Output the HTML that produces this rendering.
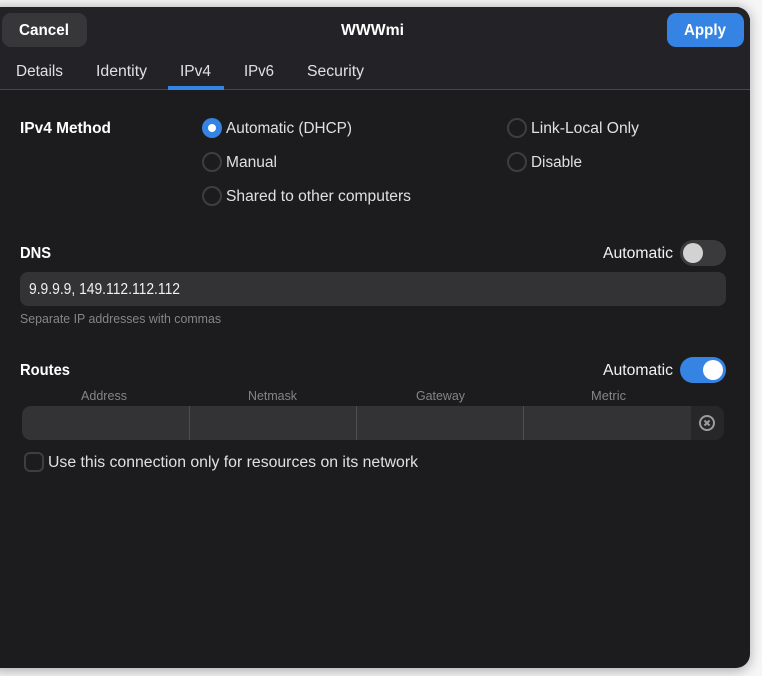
<!DOCTYPE html>
<html><head><meta charset="utf-8"><style>
html,body{margin:0;padding:0;background:#f6f6f6;width:762px;height:676px;overflow:hidden}
svg{display:block;position:absolute;left:0;top:0}
text{font-family:"Liberation Sans",sans-serif;font-size:15.5px;fill:#e0e0e0}
.b{font-weight:700;fill:#fff}
.s{font-size:12.5px;fill:#858585}
</style></head><body>
<svg width="762" height="676" viewBox="0 0 762 676" xmlns="http://www.w3.org/2000/svg">
<defs>
<filter id="sh" x="-5%" y="-5%" width="110%" height="110%"><feGaussianBlur stdDeviation="6"/></filter>
<clipPath id="win"><rect x="-14" y="7" width="764" height="661" rx="14"/></clipPath>
</defs>
<rect x="-14" y="7" width="764" height="664" rx="14" fill="#000" opacity=".3" filter="url(#sh)"/>
<g clip-path="url(#win)">
<rect x="-14" y="7" width="764" height="661" fill="#1c1c1e"/>
<rect x="-14" y="7" width="764" height="82" fill="#232327"/>
<rect x="-14" y="89" width="764" height="1" fill="#48484a"/>
</g>
<rect x="2" y="13" width="85" height="34" rx="9" fill="#37373a"/>
<text class="b" x="19" y="35" textLength="50" lengthAdjust="spacingAndGlyphs">Cancel</text>
<text class="b" x="341" y="35" textLength="63" lengthAdjust="spacingAndGlyphs">WWWmi</text>
<rect x="667" y="13" width="77" height="34" rx="9" fill="#3584e4"/>
<text class="b" x="684" y="35" textLength="42" lengthAdjust="spacingAndGlyphs">Apply</text>

<text x="16" y="76" textLength="47" lengthAdjust="spacingAndGlyphs">Details</text>
<text x="96" y="76" textLength="51" lengthAdjust="spacingAndGlyphs">Identity</text>
<text x="180" y="76" textLength="31" lengthAdjust="spacingAndGlyphs">IPv4</text>
<text x="244" y="76" textLength="30" lengthAdjust="spacingAndGlyphs">IPv6</text>
<text x="307" y="76" textLength="57" lengthAdjust="spacingAndGlyphs">Security</text>
<rect x="168" y="86" width="56" height="4" fill="#3584e4"/>

<text class="b" x="20" y="133" textLength="91" lengthAdjust="spacingAndGlyphs">IPv4 Method</text>
<circle cx="212" cy="128" r="10" fill="#3584e4"/>
<circle cx="212" cy="128" r="4" fill="#fff"/>
<text x="226" y="133" textLength="126" lengthAdjust="spacingAndGlyphs">Automatic (DHCP)</text>
<circle cx="212" cy="162" r="9" fill="none" stroke="#3e3e40" stroke-width="2"/>
<text x="226" y="167" textLength="51" lengthAdjust="spacingAndGlyphs">Manual</text>
<circle cx="212" cy="196" r="9" fill="none" stroke="#3e3e40" stroke-width="2"/>
<text x="226" y="201" textLength="185" lengthAdjust="spacingAndGlyphs">Shared to other computers</text>
<circle cx="517" cy="128" r="9" fill="none" stroke="#3e3e40" stroke-width="2"/>
<text x="531" y="133" textLength="108" lengthAdjust="spacingAndGlyphs">Link-Local Only</text>
<circle cx="517" cy="162" r="9" fill="none" stroke="#3e3e40" stroke-width="2"/>
<text x="531" y="167" textLength="51" lengthAdjust="spacingAndGlyphs">Disable</text>

<text class="b" x="20" y="258" textLength="31" lengthAdjust="spacingAndGlyphs">DNS</text>
<text x="603" y="258" textLength="70" lengthAdjust="spacingAndGlyphs" style="fill:#f2f2f2">Automatic</text>
<rect x="680" y="240" width="46" height="26" rx="13" fill="#3a3a3d"/>
<circle cx="693" cy="253" r="10" fill="#d2d2d2"/>
<rect x="20" y="272" width="706" height="34" rx="8" fill="#333336"/>
<text x="29" y="294" textLength="151" lengthAdjust="spacingAndGlyphs" style="fill:#f0f0f0">9.9.9.9, 149.112.112.112</text>
<text class="s" x="20" y="323" textLength="201" lengthAdjust="spacingAndGlyphs">Separate IP addresses with commas</text>

<text class="b" x="20" y="375" textLength="50" lengthAdjust="spacingAndGlyphs">Routes</text>
<text x="603" y="375" textLength="70" lengthAdjust="spacingAndGlyphs" style="fill:#f2f2f2">Automatic</text>
<rect x="680" y="357" width="46" height="26" rx="13" fill="#3584e4"/>
<circle cx="713" cy="370" r="10" fill="#fff"/>

<text class="s" x="81" y="400" textLength="46" lengthAdjust="spacingAndGlyphs">Address</text>
<text class="s" x="248" y="400" textLength="49" lengthAdjust="spacingAndGlyphs">Netmask</text>
<text class="s" x="416" y="400" textLength="49" lengthAdjust="spacingAndGlyphs">Gateway</text>
<text class="s" x="591" y="400" textLength="35" lengthAdjust="spacingAndGlyphs">Metric</text>

<rect x="22" y="406" width="702" height="34" rx="9" fill="#272729"/>
<path d="M691 406H31a9 9 0 0 0-9 9v16a9 9 0 0 0 9 9H691z" fill="#333336"/>
<rect x="189" y="406" width="1" height="34" fill="#4e4e50"/>
<rect x="356" y="406" width="1" height="34" fill="#4e4e50"/>
<rect x="523" y="406" width="1" height="34" fill="#4e4e50"/>
<circle cx="707" cy="423" r="7" fill="none" stroke="#9c9c9c" stroke-width="2"/>
<path d="M704.5 420.5l5 5M709.5 420.5l-5 5" fill="none" stroke="#9c9c9c" stroke-width="2"/>

<rect x="25" y="453" width="18" height="18" rx="5" fill="none" stroke="#3e3e40" stroke-width="2"/>
<text x="48" y="467" textLength="370" lengthAdjust="spacingAndGlyphs">Use this connection only for resources on its network</text>
</svg>
</body></html>
